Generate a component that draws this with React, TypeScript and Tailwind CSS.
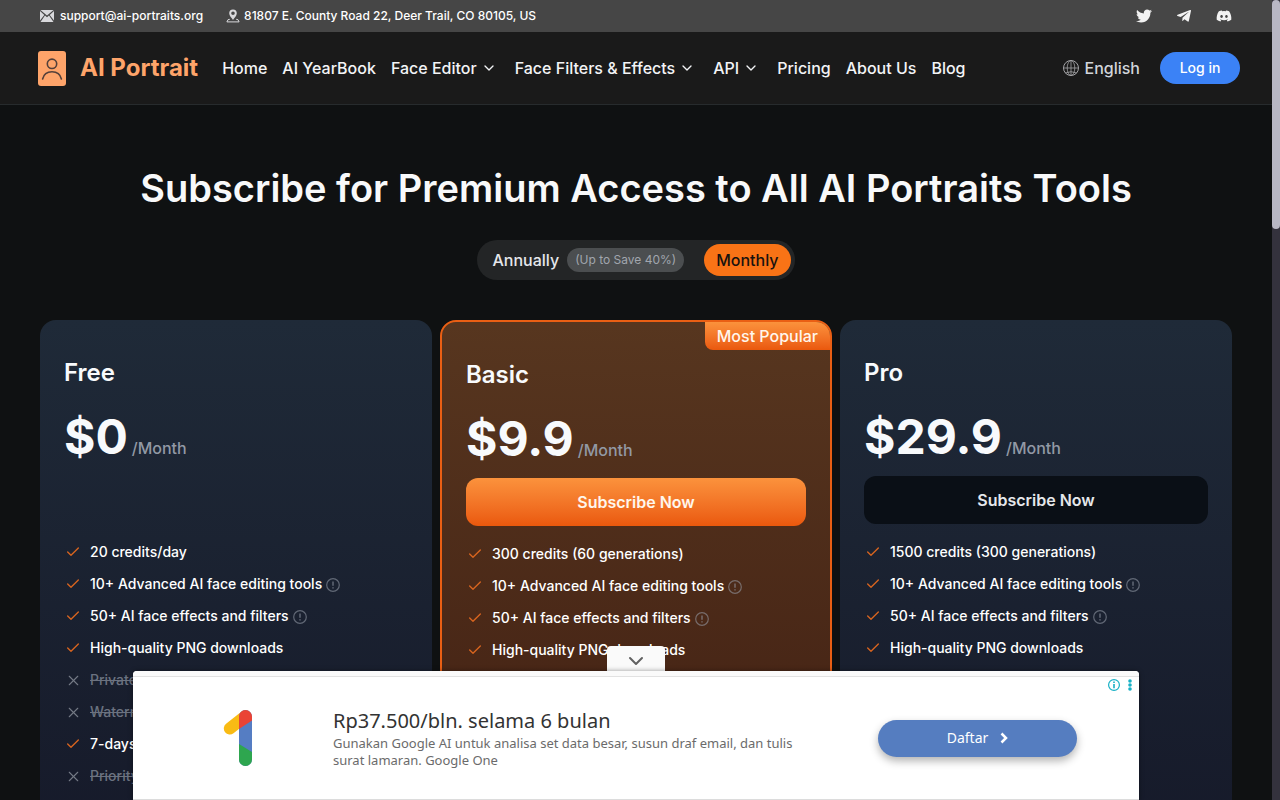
import React from 'react'
import { Check, ChevronDown, X } from 'lucide-react'
import { FaDiscord, FaTelegramPlane, FaTwitter } from 'react-icons/fa'

type Feature = {
    text: string,
    included: boolean,
    hint?: boolean,
}

type Plan = {
    name: string,
    price: string,
    popular?: boolean,
    free?: boolean,
    features: Feature[],
}

const navItems = [
    { label: 'Home' },
    { label: 'AI YearBook' },
    { label: 'Face Editor', menu: true },
    { label: 'Face Filters & Effects', menu: true },
    { label: 'API', menu: true },
    { label: 'Pricing' },
    { label: 'About Us' },
    { label: 'Blog' },
]

// rows that every plan includes
const commonFeatures: Feature[] = [
    { text: '10+ Advanced AI face editing tools', included: true, hint: true },
    { text: '50+ AI face effects and filters', included: true, hint: true },
    { text: 'High-quality PNG downloads', included: true },
]

const plans: Plan[] = [
    {
        name: 'Free',
        price: '$0',
        free: true,
        features: [
            { text: '20 credits/day', included: true },
            ...commonFeatures,
            { text: 'Private generation', included: false },
            { text: 'Watermark-free', included: false },
            { text: '7-days history', included: true },
            { text: 'Priority support', included: false },
        ],
    },
    {
        name: 'Basic',
        price: '$9.9',
        popular: true,
        features: [{ text: '300 credits (60 generations)', included: true }, ...commonFeatures],
    },
    {
        name: 'Pro',
        price: '$29.9',
        features: [{ text: '1500 credits (300 generations)', included: true }, ...commonFeatures],
    },
]

const MailIcon = () => (
    <svg width="14" height="12" viewBox="0 0 14 12" fill="#d9d9dc" aria-hidden="true">
        <path d="M.4 0h13.2L7 5.6z" />
        <path d="M0 .9 4.3 5 0 10.6zM14 .9 9.7 5l4.3 5.6z" />
        <path d="M.5 12 5 5.6l2 1.7 2-1.7 4.5 6.4z" />
    </svg>
)

const PinIcon = () => (
    <svg width="14" height="14" viewBox="0 0 14 14" aria-hidden="true">
        <path
            fill="#d9d9dc"
            fillRule="evenodd"
            d="M7 .5a3.800 3.800 0 0 1 3.800 3.800C10.800 6.800 8.500 8.600 7 11 5.500 8.600 3.200 6.800 3.200 4.300A3.800 3.800 0 0 1 7 .5zm0 2a1.800 1.800 0 1 0 0 3.600 1.800 1.800 0 0 0 0-3.600z"
        />
        <path d="M3.800 10.300 2 10.700.9 12.900h12.200L12 10.700l-1.800-.4" fill="none" stroke="#d9d9dc" />
    </svg>
)

const GlobeIcon = () => (
    <svg width="16" height="16" viewBox="0 0 16 16" fill="none" stroke="#a3a3a6" aria-hidden="true">
        <circle cx="8" cy="8" r="7.500" />
        <ellipse cx="8" cy="8" rx="3.800" ry="7.500" strokeWidth=".8" />
        <path d="M8 .5v15M.5 8h15M2.200 13q5.800-2.600 11.600 0" strokeWidth=".8" />
    </svg>
)

const HintIcon = () => (
    <svg className="-ml-1 mt-0.5 shrink-0" width="14" height="14" viewBox="0 0 14 14" fill="none" stroke="#9ca3af" opacity=".55" aria-hidden="true">
        <circle cx="7" cy="7" r="6.300" strokeWidth="1.200" />
        <path d="M7 3.500v4.300M7 9.200v1.400" strokeWidth="1.500" />
    </svg>
)

const Logo = () => (
    <svg width="28" height="35" viewBox="0 0 28 35" aria-hidden="true">
        <rect width="28" height="35" rx="3" fill="#fea46a" />
        <g fill="none" stroke="#54403a" strokeWidth="1.600" strokeLinecap="round">
            <circle cx="14" cy="12.800" r="4.700" />
            <path d="M4.600 28c1-4.600 4.600-7.300 9.400-7.300s8.400 2.700 9.400 7.300" />
        </g>
    </svg>
)

const TopBar = () => (
    <div className="flex h-8 items-center justify-between bg-[#464646] px-10 text-xs font-medium text-white">
        <div className="flex items-center gap-[23px]">
            <a href="#mail" className="flex items-center gap-1.5">
                <MailIcon />
                support@ai-portraits.org
            </a>
            <address className="flex items-center gap-1 not-italic">
                <PinIcon />
                81807 E. County Road 22, Deer Trail, CO 80105, US
            </address>
        </div>
        <div className="flex items-center gap-6 text-[#f2f2f2]">
            <a href="#twitter" aria-label="Twitter"><FaTwitter size={16} /></a>
            <a href="#telegram" aria-label="Telegram"><FaTelegramPlane size={16} /></a>
            <a href="#discord" aria-label="Discord"><FaDiscord size={16} /></a>
        </div>
    </div>
)

const Header = () => (
    <header className="flex h-[73px] items-center border-b border-[#272b2d] bg-[#1a1a1a] pl-[38px] pr-8 font-medium text-[#f3f4f6]">
        <a href="#top" className="flex items-center gap-3.5 text-2xl font-bold text-[#fea46a]">
            <Logo />
            AI Portrait
        </a>
        <nav className="ml-6 flex flex-1 items-center gap-[15px] whitespace-nowrap">
            {navItems.map((item) => (
                item.menu
                    ? <button key={item.label} type="button" className="flex items-center gap-1 pr-[3px]">
                        {item.label}
                        <ChevronDown size={16} strokeWidth={2} />
                    </button>
                    : <a key={item.label} href="#nav">{item.label}</a>
            ))}
        </nav>
        <button type="button" className="flex items-center gap-1.5 text-[#d1d5db]">
            <GlobeIcon />
            English
        </button>
        <button type="button" className="ml-5 h-8 w-20 rounded-full bg-[#3b82f6] text-sm text-white">Log in</button>
    </header>
)

const BillingToggle = () => (
    <div className="mx-auto mt-6 flex h-10 w-fit items-center gap-2 rounded-full bg-[#232526] p-1 font-medium">
        <button type="button" className="flex h-8 items-center gap-2 rounded-full pl-[11px] pr-3 text-[#e5e7eb]">
            Annually
            <span className="flex h-6 items-center rounded-full bg-[#4b4e50] px-2 text-xs font-normal text-[#a1a6ae]">(Up to Save 40%)</span>
        </button>
        <button type="button" className="h-8 rounded-full bg-[#f97316] px-3 text-[#17120f]">Monthly</button>
    </div>
)

const FeatureRow = ({ feature }: { feature: Feature }) => (
    <li className="flex h-8 items-center gap-2">
        <span className="flex w-[18px] shrink-0 justify-center">
            {feature.included
                ? <Check size={16} strokeWidth={2} className="text-[#d9651f]" />
                : <X size={17} strokeWidth={1.5} className="text-[#747a86]" />}
        </span>
        <span className={feature.included ? 'text-white' : 'text-[#6b7280] line-through'}>{feature.text}</span>
        {feature.hint && <HintIcon />}
    </li>
)

const PlanCard = ({ plan }: { plan: Plan }) => (
    <section
        className={plan.popular
            ? 'relative rounded-2xl border-2 border-[#ea5f14] bg-linear-to-b from-[#57361f] to-[#422013] px-6 pb-10 pt-[33px]'
            : 'rounded-2xl bg-linear-to-b from-[#1f2a38] to-[#161a2a] px-6 pb-10 pt-[33px]'}
    >
        {plan.popular && (
            <div className="absolute right-0 top-0 h-7 rounded-bl-lg rounded-tr-[14px] bg-linear-to-b from-[#fb923c] to-[#ea580c] px-3 leading-7 text-orange-50">
                Most Popular
            </div>
        )}
        <h2 className="text-2xl font-semibold leading-10 text-slate-50">{plan.name}</h2>
        <p className="mt-5 flex items-baseline gap-1">
            <span className="text-5xl font-bold leading-12 text-slate-50">{plan.price}</span>
            <span className="text-[#9299a5]">/Month</span>
        </p>
        <div className="mt-[15px] h-12">
            {!plan.free && (
                <button
                    type="button"
                    className={plan.popular
                        ? 'h-12 w-full rounded-xl bg-linear-to-b from-[#fb923c] to-[#ea580c] font-semibold text-orange-50'
                        : 'h-12 w-full rounded-xl bg-[#0a0f16] font-semibold text-[#e5e7eb]'}
                >
                    Subscribe Now
                </button>
            )}
        </div>
        <ul className="mt-3 text-sm">
            {plan.features.map((feature) => <FeatureRow key={feature.text} feature={feature} />)}
        </ul>
    </section>
)

const GoogleOneLogo = () => (
    <svg width="30" height="58" viewBox="0 0 30 58" aria-hidden="true">
        <defs>
            <clipPath id="stem"><path d="M16 7.500a6.500 6.500 0 0 1 13 0v43a6.500 6.500 0 0 1-13 0z" /></clipPath>
        </defs>
        <path d="M22 7.500 6.800 19.500" stroke="#f9bb14" strokeWidth="12" strokeLinecap="round" />
        <g clipPath="url(#stem)">
            <path d="M16 0h13v58H16z" fill="#557dc3" />
            <path d="M16 0h13v11.500L16 20z" fill="#ea4335" />
            <path d="m16 35 13 8v15H16z" fill="#2ea64f" />
        </g>
    </svg>
)

const AdBanner = () => (
    <aside className="absolute inset-x-0 bottom-0 mx-auto w-[1006px] max-w-full font-['Noto_Sans','Open_Sans',sans-serif]">
        <button type="button" aria-label="Collapse" className="mx-auto flex h-[25px] w-[58px] items-center justify-center rounded-t bg-[#fafafa] pt-1 text-[#616161]">
            <ChevronDown size={24} strokeWidth={2} />
        </button>
        <div className="rounded-t border-b border-[#dcdcdc] bg-white shadow-[0_0_5px_rgba(0,0,0,0.4)]">
            <div className="h-1.5 rounded-t border-b border-[#e2e2e2] bg-[#fafafa]" />
            <div className="relative flex h-[122px] items-center pl-[90px] pr-[62px]">
                <GoogleOneLogo />
                <div className="ml-20 w-[490px]">
                    <h3 className="text-xl leading-7 text-[#333333]">Rp37.500/bln. selama 6 bulan</h3>
                    <p className="text-[13px] leading-[17px] text-[#6b6b6b]">
                        Gunakan Google AI untuk analisa set data besar, susun draf email, dan tulis surat lamaran. Google One
                    </p>
                </div>
                <a href="#daftar" className="ml-auto flex h-[37px] w-[199px] items-center justify-center gap-3 rounded-full bg-[#557dc0] text-sm text-white shadow-[0_4px_8px_rgba(0,0,0,0.3)]">
                    Daftar
                    <svg width="8" height="12" viewBox="0 0 8 12" fill="none" stroke="white" strokeWidth="2.500" aria-hidden="true">
                        <path d="m1.500 1.500 4.500 4.500-4.500 4.500" />
                    </svg>
                </a>
                <svg className="absolute right-[3px] top-0.5" width="28" height="12" viewBox="0 0 28 12" fill="none" stroke="#16b0c5" aria-hidden="true">
                    <circle cx="6" cy="6" r="5.400" strokeWidth="1.200" />
                    <path d="M6 5v4.200M6 2.600v1.500" strokeWidth="1.600" />
                    <g fill="#16b0c5" stroke="none">
                        <circle cx="22" cy="2" r="1.800" />
                        <circle cx="22" cy="6" r="1.800" />
                        <circle cx="22" cy="10" r="1.800" />
                    </g>
                </svg>
            </div>
        </div>
    </aside>
)

const App = () => {
    return (
        <div className="flex h-screen overflow-hidden bg-[#0f1112] font-['Inter',sans-serif]">
            <div className="relative min-w-0 flex-1 overflow-hidden">
                <TopBar />
                <Header />
                <main className="px-10 pt-[55px] font-medium">
                    <h1 className="text-center text-[38px] font-semibold leading-14 text-[#f8f9fa]">
                        Subscribe for Premium Access to All AI Portraits Tools
                    </h1>
                    <BillingToggle />
                    <div className="mt-10 grid grid-cols-3 gap-2">
                        {plans.map((plan) => <PlanCard key={plan.name} plan={plan} />)}
                    </div>
                </main>
                <AdBanner />
            </div>
            {/* scroll track */}
            <div className="w-2 bg-[#34323d]">
                <div className="h-[229px] rounded-full bg-[#b8b7c4]" />
            </div>
        </div>
    )
}

export default App
